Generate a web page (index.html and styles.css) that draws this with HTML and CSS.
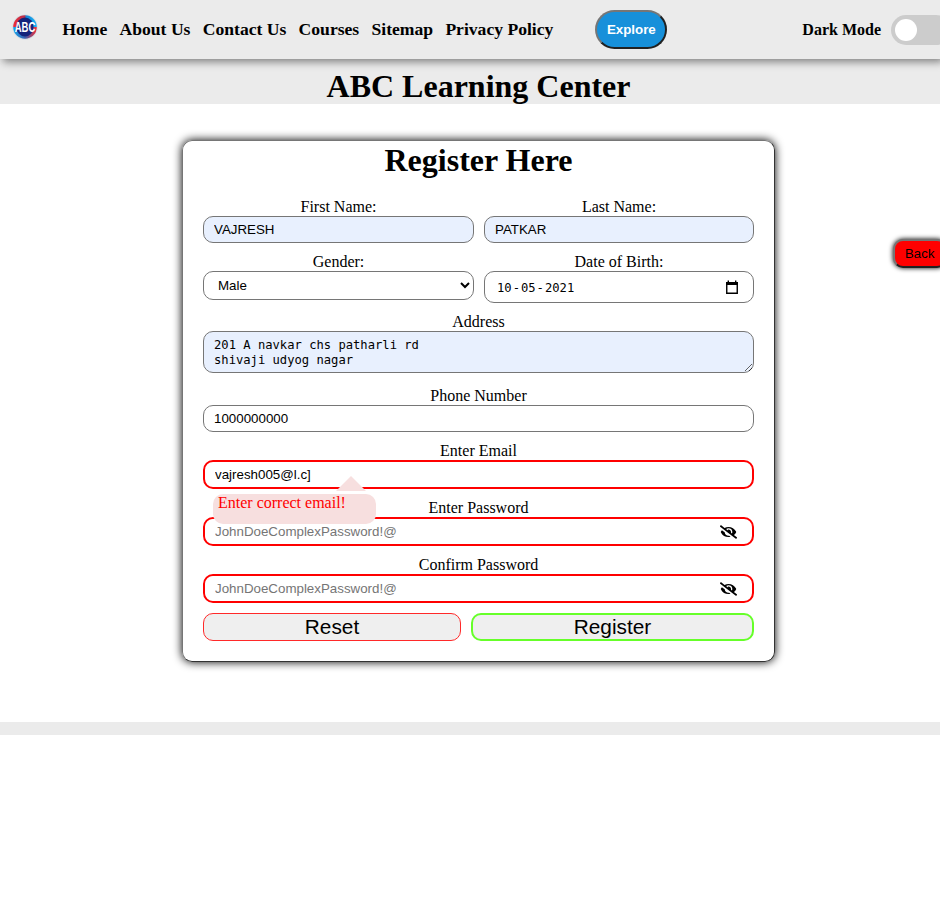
FILE: index.html
```html
<!DOCTYPE html>
<html lang="en">
<head>
<meta charset="utf-8">
<title>ABC Learning Center</title>
<link rel="stylesheet" href="styles.css">
</head>
<body>
<header class="navbar">
  <svg class="logo" viewBox="0 0 26 26" role="img" aria-label="ABC">
    <defs>
      <linearGradient id="ring" x1="0" y1="0" x2="1" y2="0">
        <stop offset="0" stop-color="#ee2c36"/><stop offset=".48" stop-color="#b5314f"/>
        <stop offset=".55" stop-color="#1685d8"/><stop offset="1" stop-color="#18b5f5"/>
      </linearGradient>
      <linearGradient id="ringlow" x1="0" y1="0" x2="1" y2="0">
        <stop offset="0" stop-color="#17a5ee"/><stop offset=".5" stop-color="#3a5fae"/>
        <stop offset="1" stop-color="#f22a35"/>
      </linearGradient>
    </defs>
    <circle cx="13" cy="13" r="12.6" fill="#d3dce2"/>
    <path d="M1.2 13a11.800 11.800 0 0 1 23.600 0z" fill="url(#ring)"/>
    <path d="M1.2 13a11.800 11.800 0 0 0 23.600 0z" fill="url(#ringlow)"/>
    <ellipse cx="13" cy="13" rx="8.600" ry="9.400" fill="#13247c"/>
    <text x="13" y="17.9" text-anchor="middle" textLength="20.5" lengthAdjust="spacingAndGlyphs" class="logo-text">ABC</text>
  </svg>
  <nav class="links">
    <a>Home</a><a>About Us</a><a>Contact Us</a><a>Courses</a><a>Sitemap</a><a>Privacy Policy</a>
  </nav>
  <button class="explore">Explore</button>
  <div class="mode"><span>Dark Mode</span><span class="switch"></span></div>
</header>
<h1 class="title">ABC Learning Center</h1>
<button class="back">Back</button>
<main>
  <form class="card">
    <h1>Register Here</h1>
    <div class="row">
      <div class="field"><label>First Name:</label><input class="filled" type="text" value="VAJRESH"></div>
      <div class="field"><label>Last Name:</label><input class="filled" type="text" value="PATKAR"></div>
    </div>
    <div class="row">
      <div class="field"><label>Gender:</label><select><option>Male</option><option>Female</option></select></div>
      <div class="field"><label>Date of Birth:</label>
        <div class="date">
          <span class="digits"><span>10</span><span>-</span><span>05</span><span>-</span><span>2021</span></span>
          <svg width="14" height="15" viewBox="0 0 14 15"><path d="M1.75 3h10.5v10.2H1.75z" fill="none" stroke="#000" stroke-width="1.4"/><path d="M1 2h12v3H1zM2.6.5H4V3H2.6zM10 .5h1.4V3H10z"/></svg>
        </div>
      </div>
    </div>
    <div class="field address"><label>Address</label><textarea class="filled" spellcheck="false">201 A navkar chs patharli rd
shivaji udyog nagar</textarea></div>
    <div class="field"><label>Phone Number</label><input type="text" value="1000000000"></div>
    <div class="field"><label>Enter Email</label><input class="invalid" type="text" value="vajresh005@l.c]">
      <div class="tip">Enter correct email!</div>
    </div>
    <div class="field"><label>Enter Password</label>
      <div class="secret invalid"><input type="password" placeholder="JohnDoeComplexPassword!@">
        <svg class="eye" viewBox="0 0 640 512"><path d="M320 400c-75.850 0-137.250-58.710-142.900-133.110L72.200 185.820c-13.790 17.300-26.480 35.590-36.720 55.590a32.350 32.350 0 0 0 0 29.190C89.710 376.410 197.070 448 320 448c26.910 0 52.870-4 77.890-10.460L346 397.390a144.130 144.130 0 0 1-26 2.610zm313.820 58.100l-110.550-85.440a331.250 331.250 0 0 0 81.250-102.070 32.350 32.350 0 0 0 0-29.190C550.290 135.590 442.930 64 320 64a308.150 308.150 0 0 0-147.320 37.700L45.460 3.370A16 16 0 0 0 23 6.180L3.370 31.450A16 16 0 0 0 6.180 53.900l588.360 454.730a16 16 0 0 0 22.460-2.810l19.640-25.270a16 16 0 0 0-2.820-22.450zM450.550 316.760l-39.300-30.380A94.750 94.750 0 0 0 416 256a94.760 94.760 0 0 0-121.310-92.210A47.650 47.650 0 0 1 304 192a46.640 46.640 0 0 1-1.540 10l-73.610-56.890A142.310 142.310 0 0 1 320 112a143.920 143.920 0 0 1 144 144c0 21.630-5.290 41.790-13.450 60.760z"/></svg></div>
    </div>
    <div class="field"><label>Confirm Password</label>
      <div class="secret invalid"><input type="password" placeholder="JohnDoeComplexPassword!@">
        <svg class="eye" viewBox="0 0 640 512"><path d="M320 400c-75.850 0-137.250-58.710-142.900-133.110L72.200 185.820c-13.790 17.300-26.480 35.590-36.720 55.590a32.350 32.350 0 0 0 0 29.190C89.710 376.410 197.070 448 320 448c26.910 0 52.870-4 77.890-10.460L346 397.390a144.130 144.130 0 0 1-26 2.610zm313.820 58.100l-110.550-85.440a331.250 331.250 0 0 0 81.250-102.070 32.350 32.350 0 0 0 0-29.190C550.290 135.590 442.930 64 320 64a308.150 308.150 0 0 0-147.320 37.700L45.460 3.370A16 16 0 0 0 23 6.180L3.370 31.450A16 16 0 0 0 6.180 53.900l588.360 454.730a16 16 0 0 0 22.460-2.810l19.640-25.270a16 16 0 0 0-2.820-22.450zM450.550 316.760l-39.300-30.380A94.750 94.750 0 0 0 416 256a94.760 94.760 0 0 0-121.310-92.210A47.650 47.650 0 0 1 304 192a46.640 46.640 0 0 1-1.540 10l-73.610-56.890A142.310 142.310 0 0 1 320 112a143.920 143.920 0 0 1 144 144c0 21.630-5.290 41.790-13.450 60.760z"/></svg></div>
    </div>
    <div class="actions"><button type="button" class="reset">Reset</button><button type="button" class="register">Register</button></div>
  </form>
</main>
<footer class="footer"></footer>
</body>
</html>
```

FILE: styles.css
```css
* { box-sizing: border-box; }

html { overflow: hidden; }

body {
  margin: 0;
  overflow: hidden;
  background: #fff;
  color: #000;
  font: 16px/18px "Liberation Serif", serif;
}

.navbar {
  position: relative;
  display: flex;
  align-items: center;
  height: 59px;
  padding-left: 12px;
  background: #ebebeb;
  box-shadow: 3px 3px 8px rgba(0, 0, 0, .45);
  white-space: nowrap;
}

.logo { flex: none; width: 26px; height: 26px; margin-bottom: 5px; overflow: visible; }
.logo-text { font: bold 14px "Liberation Sans", sans-serif; fill: #fff; }

.links {
  display: flex;
  gap: 12.3px;
  margin: 0 0 2px 24.3px;
  font-size: 17.6px;
  font-weight: bold;
}

button { margin: 0; padding: 0; color: #000; font: 13.333px "Liberation Sans", sans-serif; }

.explore {
  flex: none;
  width: 72px;
  height: 39px;
  margin-left: 42px;
  border: 2px solid;
  border-color: #767676 #212121 #212121 #767676;
  border-radius: 20px;
  background: #1790da;
  color: #fff;
  font-weight: bold;
}

.mode {
  display: flex;
  align-items: center;
  gap: 10px;
  margin-left: 135px;
  font-weight: bold;
}

.switch {
  display: block;
  flex: none;
  width: 60px;
  height: 30px;
  padding: 4px;
  border-radius: 15px;
  background: #ccc;
}

.switch::before {
  content: "";
  display: block;
  width: 22px;
  height: 22px;
  border-radius: 50%;
  background: #fff;
}

h1 { margin: 0; font-size: 32px; line-height: 37px; text-align: center; }
.title { padding: 9px 0 0 17px; line-height: 36px; background: #ebebeb; }

.back {
  position: fixed;
  top: 239px;
  left: 893px;
  width: 54px;
  height: 29px;
  border: 2px solid;
  border-color: #767676 #212121 #212121 #767676;
  border-radius: 10px;
  background: red;
  box-shadow: 0 0 5px #000;
}

.card {
  display: flex;
  flex-direction: column;
  gap: 10px;
  width: 593px;
  margin: 36px 0 0 182px;
  padding: 0 20px 20px;
  border: 1px solid;
  border-color: #767676 #333 #333 #767676;
  border-radius: 10px;
  box-shadow: 0 0 10px #000;
}

.card h1 { margin-bottom: 9px; padding-top: 1px; }
.row { display: grid; grid-template-columns: 271px 270px; gap: 10px; }
.field { position: relative; display: flex; flex-direction: column; text-align: center; }

input, select, textarea, .date {
  width: 100%;
  height: 27px;
  margin: 0;
  padding: 0 10px;
  border: 1px solid #767676;
  border-radius: 10px;
  outline: 0;
  background: #fff;
  color: #000;
  font: 13.333px "Liberation Sans", sans-serif;
}

select { height: 29px; }

.filled { background: #e8f0fe; }

textarea {
  height: 42px;
  padding: 6px 10px 4px;
  font: 12.17px/15px "DejaVu Sans Mono", monospace;
  overflow: hidden;
  resize: both;
}

.address { margin-bottom: 4px; }

.date {
  display: flex;
  align-items: center;
  justify-content: space-between;
  height: 32px;
  padding: 0 14px 0 12px;
  font: 12.17px/15px "DejaVu Sans Mono", monospace;
}

.digits { display: flex; gap: 1px; padding-top: 2px; }

.invalid { height: 29px; border: 2px solid red; }

.secret { display: flex; align-items: center; padding-right: 15px; border-radius: 10px; background: #fff; }
.secret input { height: 25px; border: 0; }
.eye { flex: none; width: 17px; height: 14px; }

.tip {
  position: absolute;
  z-index: 2;
  top: 52px;
  left: 10px;
  width: 163px;
  height: 30px;
  padding-left: 5px;
  border-radius: 10px;
  background: #f7dfdf;
  color: red;
  text-align: left;
}

.tip::before {
  content: "";
  position: absolute;
  top: -18px;
  left: 123px;
  border: solid transparent;
  border-width: 0 15px 15px;
  border-bottom-color: #f7dfdf;
}

.actions { display: grid; grid-template-columns: 258px 283px; gap: 10px; }
.actions button { height: 28px; border: 1px solid #ff2929; border-radius: 10px; background: #efefef; font-size: 20.8px; line-height: 24px; }
.actions .register { border: 2px solid #66ff29; }

.footer { height: 13px; margin-top: 60px; background: #ebebeb; }
```
